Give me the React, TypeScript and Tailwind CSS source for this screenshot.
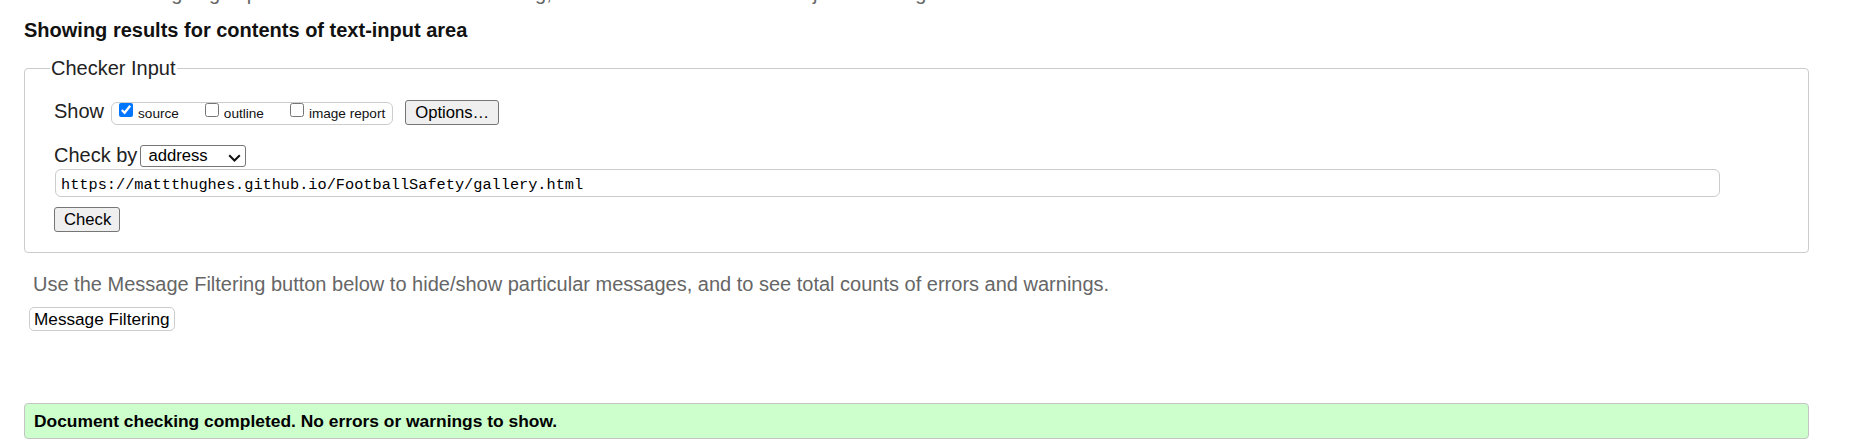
import React from "react";

function Chevron() {
  return (
    <svg width="13" height="8" viewBox="0 0 13 8" className="mt-[3px] shrink-0">
      <path d="M1.2 1.2 L6.5 6.5 L11.8 1.2" fill="none" stroke="#111" strokeWidth="2" />
    </svg>
  );
}

function Box({ checked, label, first }: { checked: boolean; label: string; first?: boolean }) {
  return (
    <label className={`flex items-start ${first ? "" : "ml-[26px]"}`}>
      <input type="checkbox" defaultChecked={checked} className="w-[14px] h-[14px] m-0 mt-[0px] shrink-0" />
      <span className="ml-[5px] text-[13.6px] leading-[21px] text-[#111]">{label}</span>
    </label>
  );
}

export default function App() {
  return (
    <div className="w-[1861px] h-[447px] overflow-hidden bg-white font-['Liberation_Sans',Arial,sans-serif] text-[20px] text-[#222]">
      <div className="flex flex-col items-start pl-[24px]">
        <p className="-mt-[19px] -ml-[4px] leading-[24px] text-[#666] whitespace-nowrap">
          This tool is an ongoing experiment in better HTML checking, and its behavior remains subject to change
        </p>
        <h2 className="mt-[13px] font-bold leading-[24px] text-[#111]">
          Showing results for contents of text-input area
        </h2>
        <fieldset className="mt-[14px] w-[1785px] border border-[#cccccc] rounded-[4px] pl-[29px] pt-[20px] pb-[20px]">
          <legend className="-ml-[4px] px-[1px] leading-[24px] text-[#222]">Checker Input</legend>
          <div className="flex flex-col items-start">
            <div className="flex items-start">
              <span className="mt-[1px] leading-[20px]">Show</span>
              <div className="ml-[7px] mt-[2px] flex items-start border border-[#cccccc] rounded-[6px] pl-[7px] pr-[7px]">
                <Box checked label="source" first />
                <Box checked={false} label="outline" />
                <Box checked={false} label="image report" />
              </div>
              <button className="ml-[12px] h-[25px] px-[9px] pt-[1px] leading-[22px] text-[16.67px] text-black bg-[#efefef] border border-[#767676] rounded-[3px]">
                Options…
              </button>
            </div>
            <div className="mt-[20px] flex items-start">
              <span className="leading-[20px]">Check by</span>
              <div className="ml-[3px] h-[22px] w-[106px] flex items-center justify-between border border-[#767676] rounded-[3px] pl-[7px] pr-[4px] bg-white">
                <span className="text-[16.67px] leading-[20px] text-black">address</span>
                <Chevron />
              </div>
            </div>
            <input
              type="text"
              readOnly
              defaultValue="https://mattthughes.github.io/FootballSafety/gallery.html"
              className="mt-[2px] ml-[1px] w-[1665px] h-[28px] border border-[#cccccc] rounded-[6px] pl-[5px] pt-[4px] font-['Liberation_Mono',monospace] text-[15.27px] text-black outline-none"
            />
            <button className="mt-[10px] h-[25px] w-[66px] px-[9px] leading-[22px] pt-[1px] text-[16.67px] text-black bg-[#efefef] border border-[#767676] rounded-[3px]">
              Check
            </button>
          </div>
        </fieldset>
        <p className="mt-[19px] ml-[9px] leading-[24px] text-[#666]">
          Use the Message Filtering button below to hide/show particular messages, and to see total counts of errors and warnings.
        </p>
        <button className="mt-[11px] ml-[5px] h-[24px] px-[4px] text-[17.2px] leading-[22px] text-black bg-white border border-[#cccccc] rounded-[5px]">
          Message Filtering
        </button>
        <div className="mt-[72px] w-[1785px] h-[36px] flex items-center pl-[9px] bg-[#ccffcc] border border-[#c4c4c4] rounded-[4px]">
          <span className="font-bold text-[17.4px] text-black">Document checking completed. No errors or warnings to show.</span>
        </div>
      </div>
    </div>
  );
}
